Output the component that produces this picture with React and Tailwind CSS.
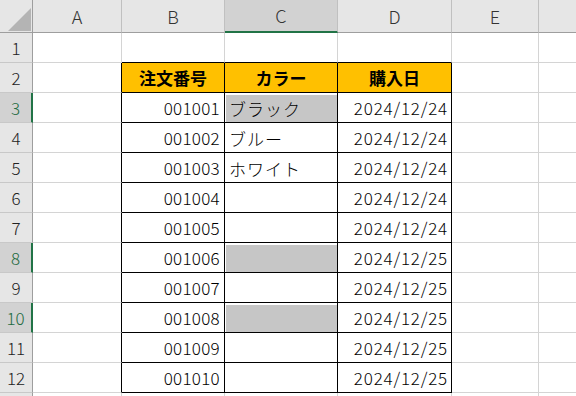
import React from 'react';

const cols = ['A', 'B', 'C', 'D', 'E', ''];
const rows = [
  ['001001', 'ブラック', '2024/12/24', true],
  ['001002', 'ブルー', '2024/12/24', false],
  ['001003', 'ホワイト', '2024/12/24', false],
  ['001004', '', '2024/12/24', false],
  ['001005', '', '2024/12/24', false],
  ['001006', '', '2024/12/25', true],
  ['001007', '', '2024/12/25', false],
  ['001008', '', '2024/12/25', true],
  ['001009', '', '2024/12/25', false],
  ['001010', '', '2024/12/25', false],
];

const font = { fontFamily: '"Noto Sans CJK JP", "Noto Sans", sans-serif' };

function RowHead({ n, selected }) {
  return (
    <div
      className={
        'flex items-center justify-center border-b border-[#c8c8c8] text-[17px] font-light ' +
        (selected
          ? 'bg-[#d2d2d2] border-r-2 border-r-[#217346] text-[#1e6b41]'
          : 'bg-[#e6e6e6] border-r border-r-[#9e9e9e] text-[#222]')
      }
    >
      {n}
    </div>
  );
}

export default function App() {
  return (
    <div className="w-[576px] h-[396px] overflow-hidden bg-white text-black" style={font}>
      <div className="grid grid-cols-[33px_89px_103px_113px_114px_87px_60px] grid-rows-[33px_repeat(13,30px)]">
        {/* column headers */}
        <div className="relative bg-[#e6e6e6] border-r border-b border-[#9e9e9e]">
          <svg className="absolute left-[8px] top-[8px]" width="23" height="23" viewBox="0 0 23 23">
            <polygon points="23,0 23,23 0,23" fill="#b4b4b4" />
          </svg>
        </div>
        {cols.map((c) => (
          <div
            key={c || 'f'}
            className={
              'flex items-center justify-center border-r border-r-[#c0c0c0] text-[18px] font-light text-[#333] ' +
              (c === 'C'
                ? 'bg-[#d2d2d2] border-b-2 border-b-[#217346]'
                : 'bg-[#e6e6e6] border-b border-b-[#9e9e9e]')
            }
          >
            {c}
          </div>
        ))}

        {/* row 1 */}
        <RowHead n={1} />
        <div className="border-r border-b border-[#d4d4d4]" />
        <div className="border-r border-r-[#d4d4d4] border-b border-b-black" />
        <div className="border-r border-r-[#d4d4d4] border-b border-b-black" />
        <div className="border-r border-r-[#d4d4d4] border-b border-b-black" />
        <div className="border-r border-b border-[#d4d4d4]" />
        <div className="border-r border-b border-[#d4d4d4]" />

        {/* row 2 header */}
        <RowHead n={2} />
        <div className="border-r border-r-black border-b border-b-[#d4d4d4]" />
        {['注文番号', 'カラー', '購入日'].map((h) => (
          <div
            key={h}
            className="flex items-center justify-center bg-[#ffc000] border-r border-b border-black text-[17px] font-bold text-black"
          >
            {h}
          </div>
        ))}
        <div className="border-r border-b border-[#d4d4d4]" />
        <div className="border-r border-b border-[#d4d4d4]" />

        {rows.map(([id, color, date, sel], i) => (
          <React.Fragment key={id}>
            <RowHead n={i + 3} selected={sel} />
            <div className="border-r border-r-black border-b border-b-[#d4d4d4]" />
            <div className="flex items-center justify-end pr-[4px] border-r border-b border-black text-[17px] font-light tracking-[0.3px]">
              {id}
            </div>
            <div className="border-r border-b border-black pl-[1px] pt-[2px]">
              <div
                className={
                  'h-full flex items-center pl-[3px] text-[17px] font-light tracking-[1px] ' +
                  (sel ? 'bg-[#c6c6c6]' : '')
                }
              >
                {color}
              </div>
            </div>
            <div className="flex items-center justify-end pr-[3px] border-r border-b border-black text-[17px] font-light tracking-[0.8px]">
              {date}
            </div>
            <div className="border-r border-b border-[#d4d4d4]" />
            <div className="border-r border-b border-[#d4d4d4]" />
          </React.Fragment>
        ))}

        {/* partial row 13 */}
        <RowHead n="" />
        <div className="border-r border-b border-[#d4d4d4]" />
        <div className="border-r border-b border-[#d4d4d4]" />
        <div className="border-r border-b border-[#d4d4d4]" />
        <div className="border-r border-b border-[#d4d4d4]" />
        <div className="border-r border-b border-[#d4d4d4]" />
        <div className="border-r border-b border-[#d4d4d4]" />
      </div>
    </div>
  );
}
